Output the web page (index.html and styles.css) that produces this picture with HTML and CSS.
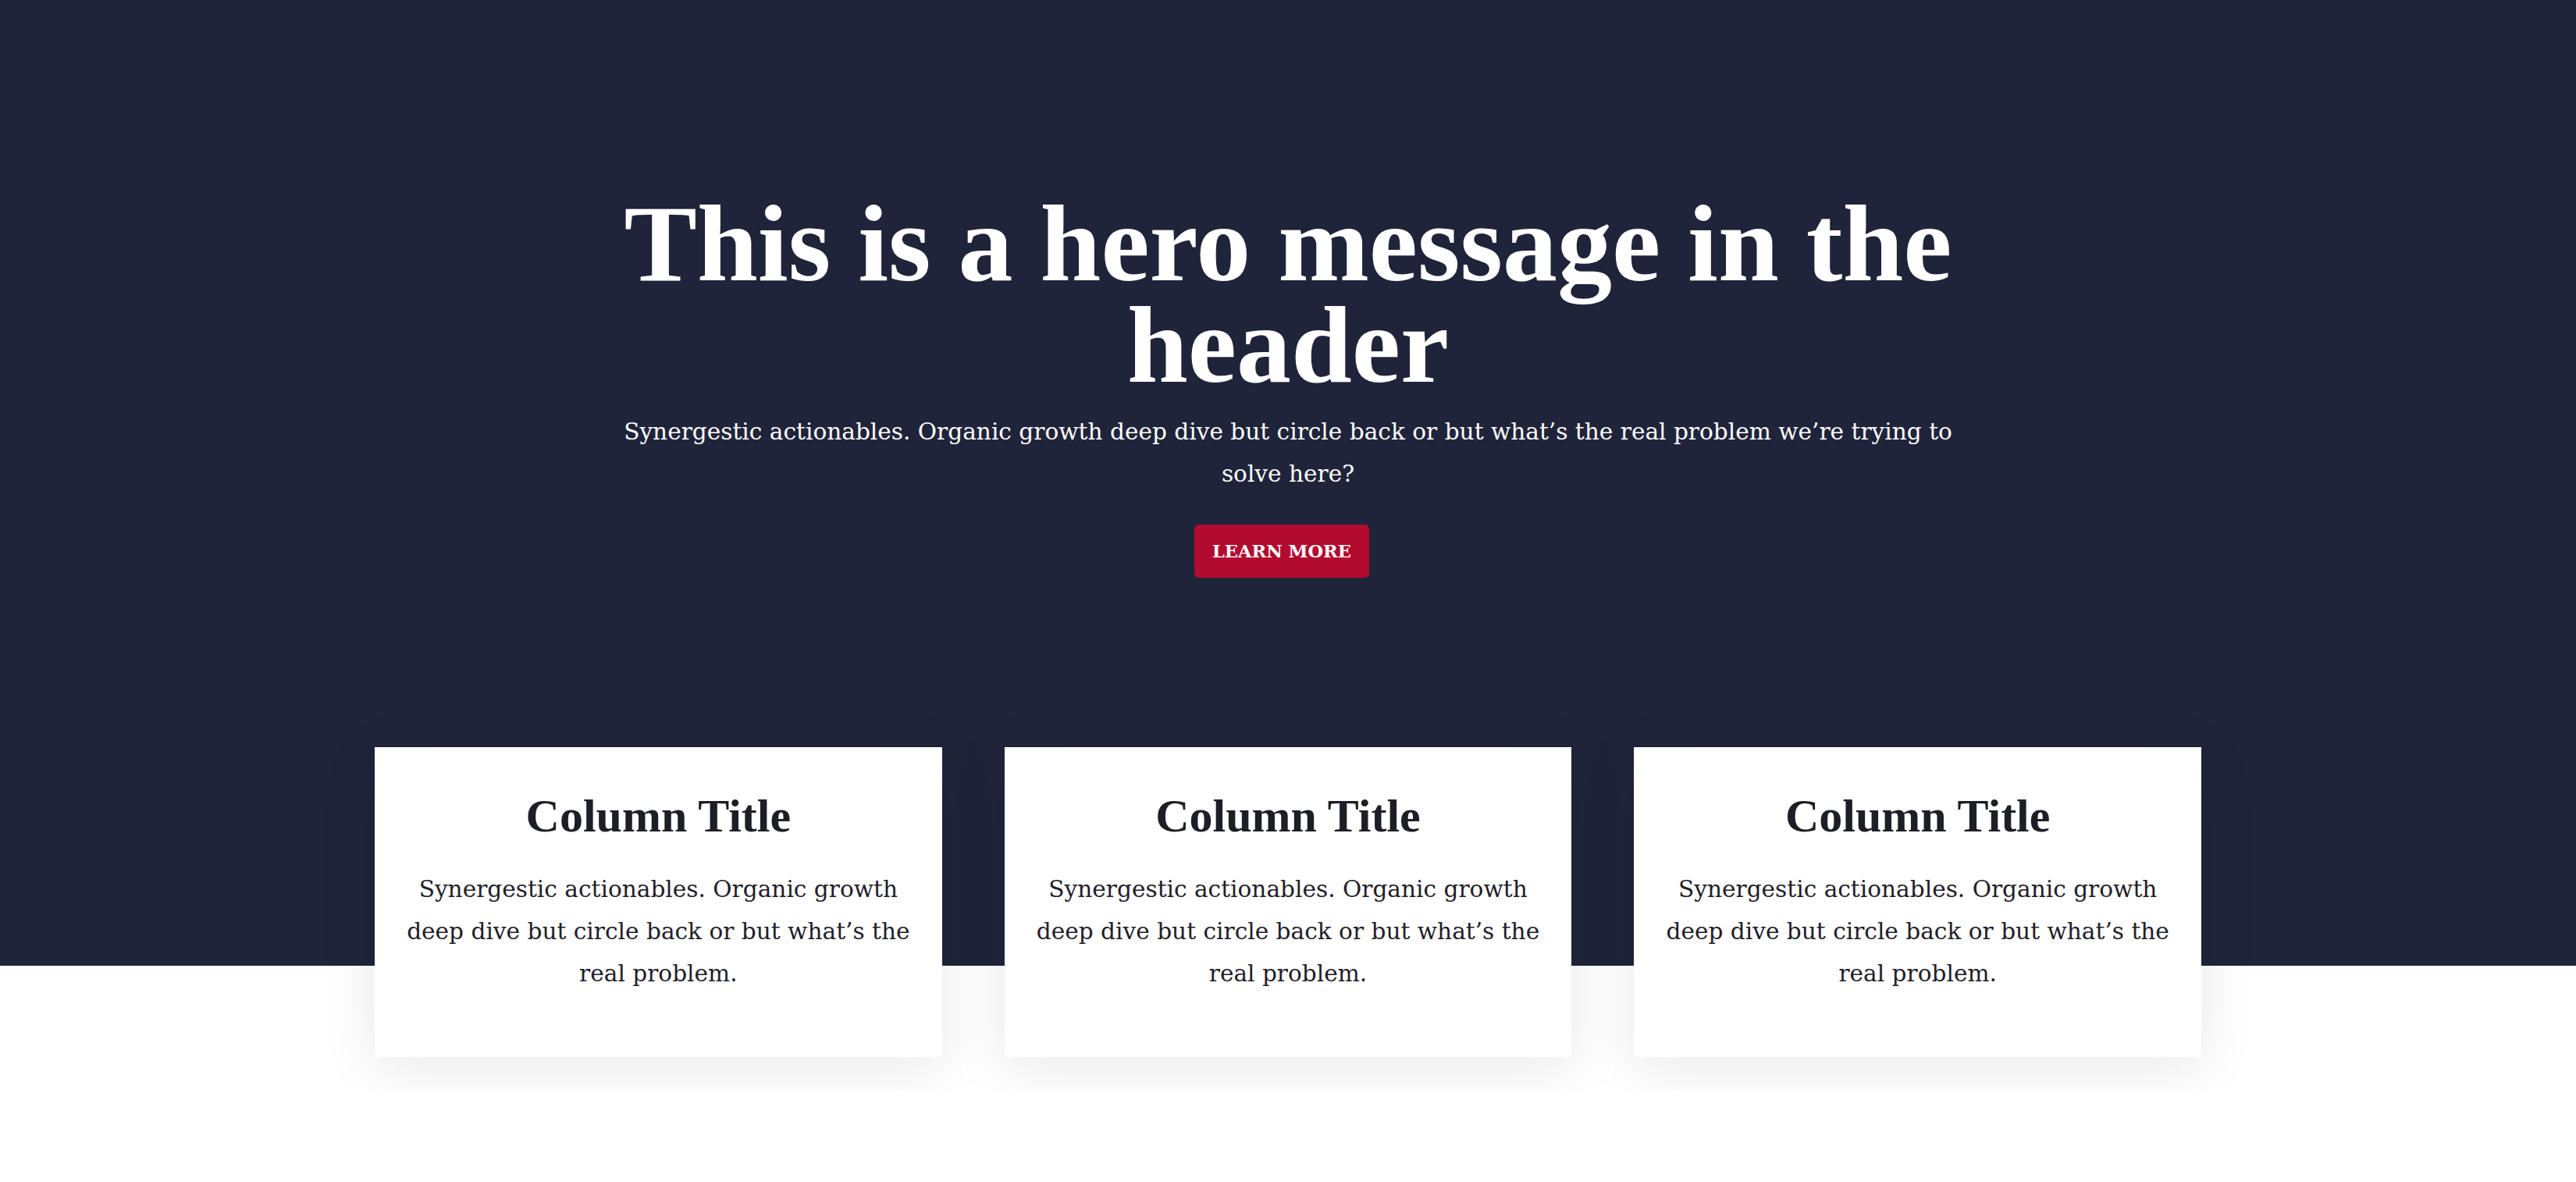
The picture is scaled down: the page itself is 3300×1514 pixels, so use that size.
FILE: index.html
```html
<!DOCTYPE html>
<html lang="en">
<head>
<meta charset="utf-8">
<title>Hero</title>
<link rel="stylesheet" href="styles.css">
</head>
<body>
<header class="hero">
  <div class="hero-inner">
    <h1 class="hero-title">This is a hero message in the header</h1>
    <p class="hero-text">Synergestic actionables. Organic growth deep dive but circle back or but what’s the real problem we’re trying to solve here?</p>
    <a class="btn" href="#">LEARN MORE</a>
  </div>
  <div class="columns">
    <div class="card">
      <h2 class="card-title">Column Title</h2>
      <p class="card-text">Synergestic actionables. Organic growth deep dive but circle back or but what’s the real problem.</p>
    </div>
    <div class="card">
      <h2 class="card-title">Column Title</h2>
      <p class="card-text">Synergestic actionables. Organic growth deep dive but circle back or but what’s the real problem.</p>
    </div>
    <div class="card">
      <h2 class="card-title">Column Title</h2>
      <p class="card-text">Synergestic actionables. Organic growth deep dive but circle back or but what’s the real problem.</p>
    </div>
  </div>
</header>
<main class="page-rest"></main>
</body>
</html>
```

FILE: styles.css
```css
* { box-sizing: border-box; }

html, body {
  margin: 0;
  padding: 0;
  background: #ffffff;
}

body {
  font-family: "DejaVu Serif", "Liberation Serif", serif;
  color: #1f2029;
}

.hero {
  display: flow-root;
  background: #20243a;
  padding-top: 247px;
}

.hero-inner {
  max-width: 1740px;
  margin: 0 auto;
  text-align: center;
}

.hero-title {
  margin: 0;
  font-family: "Liberation Serif", "DejaVu Serif", serif;
  font-weight: 700;
  font-size: 140px;
  line-height: 130px;
  color: #ffffff;
}

.hero-text {
  margin: 19px 0 0;
  font-size: 29.6px;
  line-height: 54px;
  color: #ffffff;
}

.btn {
  display: inline-block;
  margin-top: 38px;
  margin-right: 16px;
  height: 68px;
  padding: 0 23px;
  line-height: 68px;
  font-size: 22.5px;
  font-weight: 700;
  color: #ffffff;
  background: #b30a2f;
  border-radius: 6px;
  text-decoration: none;
}

.columns {
  width: 2340px;
  margin: 217px auto -117px;
  display: grid;
  grid-template-columns: repeat(3, 1fr);
  gap: 80px;
}

.card {
  background: #ffffff;
  min-height: 397px;
  padding: 52px 40px 80px;
  text-align: center;
  box-shadow: 0 14px 70px rgba(0, 0, 0, 0.09);
}

.card-title {
  margin: 0 0 31px;
  font-family: "Liberation Serif", "DejaVu Serif", serif;
  font-weight: 700;
  font-size: 60px;
  line-height: 72px;
  color: #1e1f26;
}

.card-text {
  margin: 0;
  font-size: 29.6px;
  line-height: 54px;
  color: #1f2029;
}

.page-rest {
  height: 160px;
}
```
